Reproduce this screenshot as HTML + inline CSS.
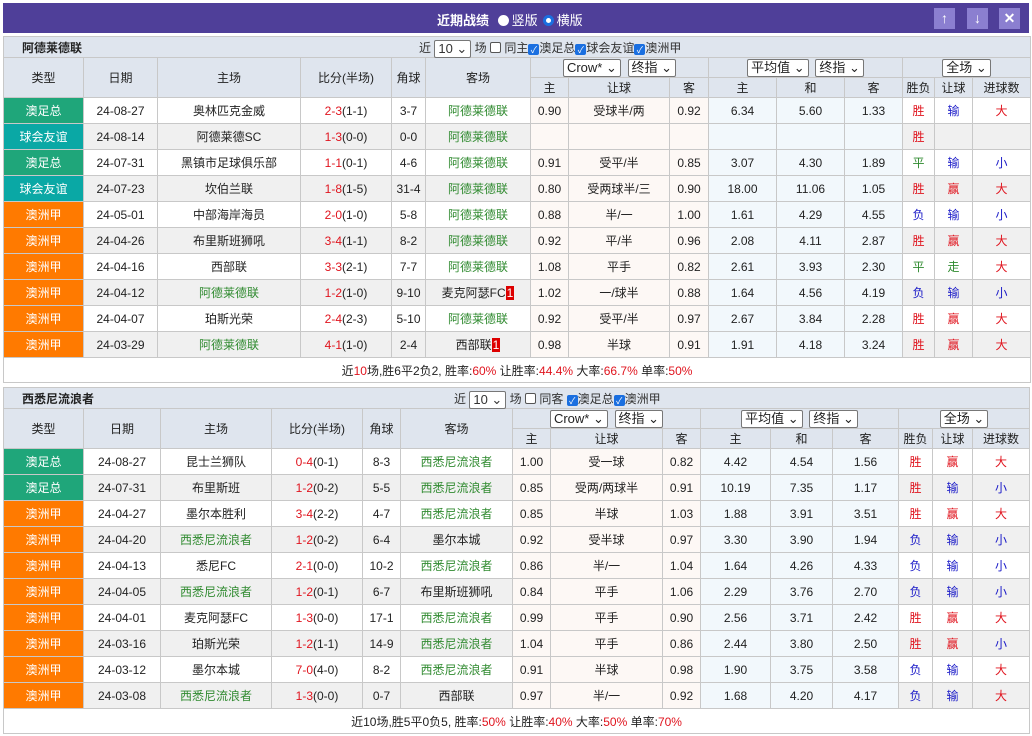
<!DOCTYPE html>
<html><head><meta charset="utf-8"><style>
body{margin:0;width:1032px;height:736px;background:#fff;font-family:"Liberation Sans","Noto Sans CJK SC",sans-serif;font-size:12px;color:#222;overflow:hidden;position:relative}
.top{position:absolute;left:3px;top:3px;width:1026px;height:30px;background:#4f3f99;color:#fff}
.top .t{position:absolute;left:434px;top:7px;font-weight:bold;font-size:13px}
.rad{display:inline-block;width:11px;height:11px;border-radius:50%;background:#fff;vertical-align:-1px;margin:0 3px 0 5px;box-sizing:border-box}
.rad.on{border:3px solid #1a6fe0}
.btn{position:absolute;top:5px;width:21px;height:21px;background:#8b7fd0;color:#fff;text-align:center;line-height:21px;font-size:14px;font-weight:bold}
table{position:absolute;left:3px;border-collapse:collapse;table-layout:fixed;width:1027px}
td{border:1px solid #c8c8c8;text-align:center;height:25px;padding:0;white-space:nowrap;overflow:hidden}
.ttl td{background:#dfe5ee;height:20px}
.hd td{background:#dfe5ee;height:19px}
.ty{color:#fff}
.g{background:#1fa67a}.c{background:#0aa8a5}.o{background:#ff7a00}
tr.e td{background:#f0f0f0}
tr.e td.ty.g{background:#1fa67a}tr.e td.ty.c{background:#0aa8a5}tr.e td.ty.o{background:#ff7a00}
td.p{background:#fdf8f5!important}td.b{background:#f2f8fc!important}
.r{color:#e0141e}.gr{color:#2f8a2f}.bl{color:#1a1ac8}.w{color:#2f8a2f}
.sel{display:inline-block;border:1px solid #777;background:#fff;height:16px;line-height:16px;padding:0 3px;font-size:13px;vertical-align:middle;border-radius:2px}
.cb{display:inline-block;width:11px;height:11px;border-radius:2px;vertical-align:-1px;box-sizing:border-box;border:1px solid #555;background:#fff}
.cb.on{background:#1a6fe0;border-color:#1a6fe0;color:#fff;font-size:9px;line-height:10px;text-align:center}
.sum td{height:24px;background:#fff}
.red1{background:#d00;color:#fff;padding:0 1px}
.nm{text-align:left;padding-left:18px;font-weight:bold}
.flt{position:absolute;z-index:2;white-space:nowrap;font-size:12px;color:#333}
</style></head><body>
<div class="top"><div class="t">近期战绩 <span class="rad"></span><span style="font-weight:normal">竖版</span><span class="rad on"></span><span style="font-weight:normal">横版</span></div>
<div class="btn" style="left:931px">&#8593;</div><div class="btn" style="left:964px">&#8595;</div><div class="btn" style="left:996px">&#10005;</div></div>

<div class="flt" style="left:419px;top:39px">近 <span class="sel">10 &#8964;</span> 场 <span class="cb"></span> 同主<span class="cb on">✓</span>澳足总<span class="cb on">✓</span>球会友谊<span class="cb on">✓</span>澳洲甲</div>
<div class="flt" style="left:454px;top:390px">近 <span class="sel">10 &#8964;</span> 场 <span class="cb"></span> 同客 <span class="cb on">✓</span>澳足总<span class="cb on">✓</span>澳洲甲</div>

<table style="top:36px">
<colgroup><col style="width:80px"><col style="width:74px"><col style="width:143px"><col style="width:91px"><col style="width:34px"><col style="width:105px"><col style="width:38px"><col style="width:101px"><col style="width:39px"><col style="width:68px"><col style="width:68px"><col style="width:58px"><col style="width:32px"><col style="width:38px"><col style="width:58px"></colgroup>
<tr class="ttl"><td colspan="15" class="nm">阿德莱德联</td></tr>
<tr class="hd"><td rowspan="2">类型</td><td rowspan="2">日期</td><td rowspan="2">主场</td><td rowspan="2">比分(半场)</td><td rowspan="2">角球</td><td rowspan="2">客场</td><td colspan="3"><span class="sel">Crow* &#8964;</span> &nbsp;<span class="sel">终指 &#8964;</span></td><td colspan="3"><span class="sel">平均值 &#8964;</span> &nbsp;<span class="sel">终指 &#8964;</span></td><td colspan="3"><span class="sel">全场 &#8964;</span></td></tr>
<tr class="hd"><td>主</td><td>让球</td><td>客</td><td>主</td><td>和</td><td>客</td><td>胜负</td><td>让球</td><td>进球数</td></tr>
<tr><td class="ty g">澳足总</td><td>24-08-27</td><td>奥林匹克金威</td><td><span class="r">2-3</span>(1-1)</td><td>3-7</td><td class="gr">阿德莱德联</td><td class="p">0.90</td><td class="p">受球半/两</td><td class="p">0.92</td><td class="b">6.34</td><td class="b">5.60</td><td class="b">1.33</td><td class="r">胜</td><td class="bl">输</td><td class="r">大</td></tr>
<tr class="e"><td class="ty c">球会友谊</td><td>24-08-14</td><td>阿德莱德SC</td><td><span class="r">1-3</span>(0-0)</td><td>0-0</td><td class="gr">阿德莱德联</td><td class="p"></td><td class="p"></td><td class="p"></td><td class="b"></td><td class="b"></td><td class="b"></td><td class="r">胜</td><td></td><td></td></tr>
<tr><td class="ty g">澳足总</td><td>24-07-31</td><td>黑镇市足球俱乐部</td><td><span class="r">1-1</span>(0-1)</td><td>4-6</td><td class="gr">阿德莱德联</td><td class="p">0.91</td><td class="p">受平/半</td><td class="p">0.85</td><td class="b">3.07</td><td class="b">4.30</td><td class="b">1.89</td><td class="w">平</td><td class="bl">输</td><td class="bl">小</td></tr>
<tr class="e"><td class="ty c">球会友谊</td><td>24-07-23</td><td>坎伯兰联</td><td><span class="r">1-8</span>(1-5)</td><td>31-4</td><td class="gr">阿德莱德联</td><td class="p">0.80</td><td class="p">受两球半/三</td><td class="p">0.90</td><td class="b">18.00</td><td class="b">11.06</td><td class="b">1.05</td><td class="r">胜</td><td class="r">赢</td><td class="r">大</td></tr>
<tr><td class="ty o">澳洲甲</td><td>24-05-01</td><td>中部海岸海员</td><td><span class="r">2-0</span>(1-0)</td><td>5-8</td><td class="gr">阿德莱德联</td><td class="p">0.88</td><td class="p">半/一</td><td class="p">1.00</td><td class="b">1.61</td><td class="b">4.29</td><td class="b">4.55</td><td class="bl">负</td><td class="bl">输</td><td class="bl">小</td></tr>
<tr class="e"><td class="ty o">澳洲甲</td><td>24-04-26</td><td>布里斯班狮吼</td><td><span class="r">3-4</span>(1-1)</td><td>8-2</td><td class="gr">阿德莱德联</td><td class="p">0.92</td><td class="p">平/半</td><td class="p">0.96</td><td class="b">2.08</td><td class="b">4.11</td><td class="b">2.87</td><td class="r">胜</td><td class="r">赢</td><td class="r">大</td></tr>
<tr><td class="ty o">澳洲甲</td><td>24-04-16</td><td>西部联</td><td><span class="r">3-3</span>(2-1)</td><td>7-7</td><td class="gr">阿德莱德联</td><td class="p">1.08</td><td class="p">平手</td><td class="p">0.82</td><td class="b">2.61</td><td class="b">3.93</td><td class="b">2.30</td><td class="w">平</td><td class="w">走</td><td class="r">大</td></tr>
<tr class="e"><td class="ty o">澳洲甲</td><td>24-04-12</td><td class="gr">阿德莱德联</td><td><span class="r">1-2</span>(1-0)</td><td>9-10</td><td>麦克阿瑟FC<span class="red1">1</span></td><td class="p">1.02</td><td class="p">一/球半</td><td class="p">0.88</td><td class="b">1.64</td><td class="b">4.56</td><td class="b">4.19</td><td class="bl">负</td><td class="bl">输</td><td class="bl">小</td></tr>
<tr><td class="ty o">澳洲甲</td><td>24-04-07</td><td>珀斯光荣</td><td><span class="r">2-4</span>(2-3)</td><td>5-10</td><td class="gr">阿德莱德联</td><td class="p">0.92</td><td class="p">受平/半</td><td class="p">0.97</td><td class="b">2.67</td><td class="b">3.84</td><td class="b">2.28</td><td class="r">胜</td><td class="r">赢</td><td class="r">大</td></tr>
<tr class="e"><td class="ty o">澳洲甲</td><td>24-03-29</td><td class="gr">阿德莱德联</td><td><span class="r">4-1</span>(1-0)</td><td>2-4</td><td>西部联<span class="red1">1</span></td><td class="p">0.98</td><td class="p">半球</td><td class="p">0.91</td><td class="b">1.91</td><td class="b">4.18</td><td class="b">3.24</td><td class="r">胜</td><td class="r">赢</td><td class="r">大</td></tr>
<tr class="sum"><td colspan="15">近<span class="r">10</span>场,胜6平2负2, 胜率:<span class="r">60%</span> 让胜率:<span class="r">44.4%</span> 大率:<span class="r">66.7%</span> 单率:<span class="r">50%</span></td></tr>
</table>

<table style="top:387px">
<colgroup><col style="width:80px"><col style="width:77px"><col style="width:111px"><col style="width:91px"><col style="width:38px"><col style="width:112px"><col style="width:38px"><col style="width:112px"><col style="width:38px"><col style="width:70px"><col style="width:62px"><col style="width:66px"><col style="width:34px"><col style="width:40px"><col style="width:57px"></colgroup>
<tr class="ttl"><td colspan="15" class="nm">西悉尼流浪者</td></tr>
<tr class="hd"><td rowspan="2">类型</td><td rowspan="2">日期</td><td rowspan="2">主场</td><td rowspan="2">比分(半场)</td><td rowspan="2">角球</td><td rowspan="2">客场</td><td colspan="3"><span class="sel">Crow* &#8964;</span> &nbsp;<span class="sel">终指 &#8964;</span></td><td colspan="3"><span class="sel">平均值 &#8964;</span> &nbsp;<span class="sel">终指 &#8964;</span></td><td colspan="3"><span class="sel">全场 &#8964;</span></td></tr>
<tr class="hd"><td>主</td><td>让球</td><td>客</td><td>主</td><td>和</td><td>客</td><td>胜负</td><td>让球</td><td>进球数</td></tr>
<tr><td class="ty g">澳足总</td><td>24-08-27</td><td>昆士兰狮队</td><td><span class="r">0-4</span>(0-1)</td><td>8-3</td><td class="gr">西悉尼流浪者</td><td class="p">1.00</td><td class="p">受一球</td><td class="p">0.82</td><td class="b">4.42</td><td class="b">4.54</td><td class="b">1.56</td><td class="r">胜</td><td class="r">赢</td><td class="r">大</td></tr>
<tr class="e"><td class="ty g">澳足总</td><td>24-07-31</td><td>布里斯班</td><td><span class="r">1-2</span>(0-2)</td><td>5-5</td><td class="gr">西悉尼流浪者</td><td class="p">0.85</td><td class="p">受两/两球半</td><td class="p">0.91</td><td class="b">10.19</td><td class="b">7.35</td><td class="b">1.17</td><td class="r">胜</td><td class="bl">输</td><td class="bl">小</td></tr>
<tr><td class="ty o">澳洲甲</td><td>24-04-27</td><td>墨尔本胜利</td><td><span class="r">3-4</span>(2-2)</td><td>4-7</td><td class="gr">西悉尼流浪者</td><td class="p">0.85</td><td class="p">半球</td><td class="p">1.03</td><td class="b">1.88</td><td class="b">3.91</td><td class="b">3.51</td><td class="r">胜</td><td class="r">赢</td><td class="r">大</td></tr>
<tr class="e"><td class="ty o">澳洲甲</td><td>24-04-20</td><td class="gr">西悉尼流浪者</td><td><span class="r">1-2</span>(0-2)</td><td>6-4</td><td>墨尔本城</td><td class="p">0.92</td><td class="p">受半球</td><td class="p">0.97</td><td class="b">3.30</td><td class="b">3.90</td><td class="b">1.94</td><td class="bl">负</td><td class="bl">输</td><td class="bl">小</td></tr>
<tr><td class="ty o">澳洲甲</td><td>24-04-13</td><td>悉尼FC</td><td><span class="r">2-1</span>(0-0)</td><td>10-2</td><td class="gr">西悉尼流浪者</td><td class="p">0.86</td><td class="p">半/一</td><td class="p">1.04</td><td class="b">1.64</td><td class="b">4.26</td><td class="b">4.33</td><td class="bl">负</td><td class="bl">输</td><td class="bl">小</td></tr>
<tr class="e"><td class="ty o">澳洲甲</td><td>24-04-05</td><td class="gr">西悉尼流浪者</td><td><span class="r">1-2</span>(0-1)</td><td>6-7</td><td>布里斯班狮吼</td><td class="p">0.84</td><td class="p">平手</td><td class="p">1.06</td><td class="b">2.29</td><td class="b">3.76</td><td class="b">2.70</td><td class="bl">负</td><td class="bl">输</td><td class="bl">小</td></tr>
<tr><td class="ty o">澳洲甲</td><td>24-04-01</td><td>麦克阿瑟FC</td><td><span class="r">1-3</span>(0-0)</td><td>17-1</td><td class="gr">西悉尼流浪者</td><td class="p">0.99</td><td class="p">平手</td><td class="p">0.90</td><td class="b">2.56</td><td class="b">3.71</td><td class="b">2.42</td><td class="r">胜</td><td class="r">赢</td><td class="r">大</td></tr>
<tr class="e"><td class="ty o">澳洲甲</td><td>24-03-16</td><td>珀斯光荣</td><td><span class="r">1-2</span>(1-1)</td><td>14-9</td><td class="gr">西悉尼流浪者</td><td class="p">1.04</td><td class="p">平手</td><td class="p">0.86</td><td class="b">2.44</td><td class="b">3.80</td><td class="b">2.50</td><td class="r">胜</td><td class="r">赢</td><td class="bl">小</td></tr>
<tr><td class="ty o">澳洲甲</td><td>24-03-12</td><td>墨尔本城</td><td><span class="r">7-0</span>(4-0)</td><td>8-2</td><td class="gr">西悉尼流浪者</td><td class="p">0.91</td><td class="p">半球</td><td class="p">0.98</td><td class="b">1.90</td><td class="b">3.75</td><td class="b">3.58</td><td class="bl">负</td><td class="bl">输</td><td class="r">大</td></tr>
<tr class="e"><td class="ty o">澳洲甲</td><td>24-03-08</td><td class="gr">西悉尼流浪者</td><td><span class="r">1-3</span>(0-0)</td><td>0-7</td><td>西部联</td><td class="p">0.97</td><td class="p">半/一</td><td class="p">0.92</td><td class="b">1.68</td><td class="b">4.20</td><td class="b">4.17</td><td class="bl">负</td><td class="bl">输</td><td class="r">大</td></tr>
<tr class="sum"><td colspan="15">近10场,胜5平0负5, 胜率:<span class="r">50%</span> 让胜率:<span class="r">40%</span> 大率:<span class="r">50%</span> 单率:<span class="r">70%</span></td></tr>
</table>
</body></html>
